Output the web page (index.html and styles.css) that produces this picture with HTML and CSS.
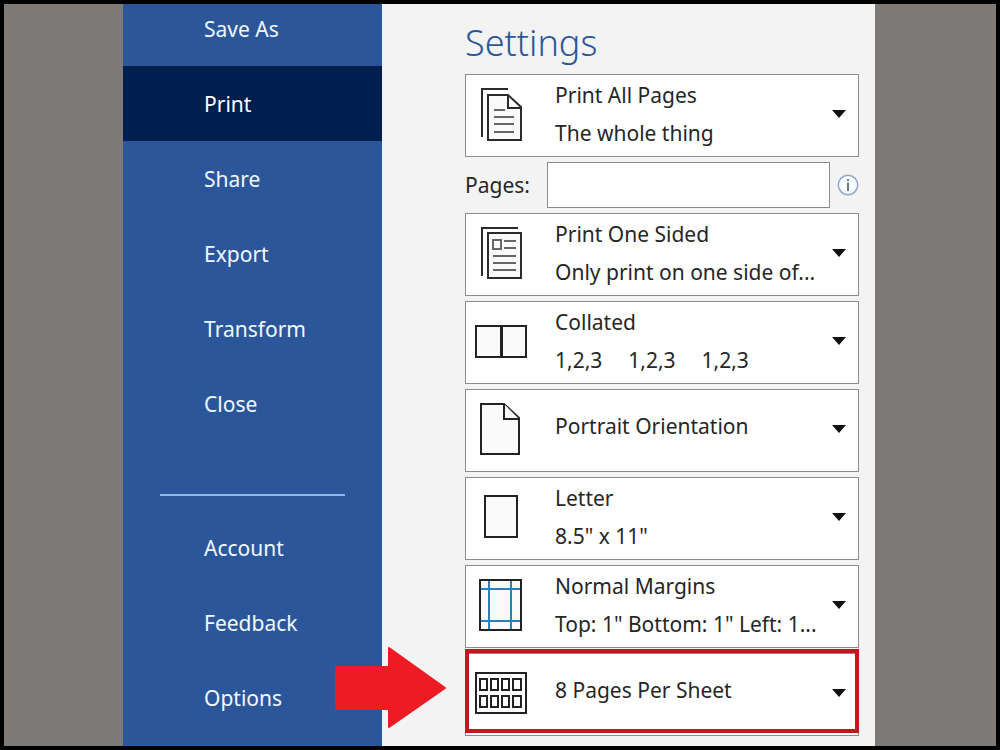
FILE: index.html
```html
<!DOCTYPE html>
<html lang="en">
<head>
<meta charset="utf-8">
<meta name="viewport" content="width=device-width, initial-scale=1">
<title>Print</title>
<link rel="stylesheet" href="styles.css">
</head>
<body>
<div class="stage">
  <nav class="sidebar" aria-label="File menu">
    <ul class="menu">
      <li><a class="menu-link" href="#save-as">Save As</a></li>
      <li><a class="menu-link active" href="#print" aria-current="page">Print</a></li>
      <li><a class="menu-link" href="#share">Share</a></li>
      <li><a class="menu-link" href="#export">Export</a></li>
      <li><a class="menu-link" href="#transform">Transform</a></li>
      <li><a class="menu-link" href="#close">Close</a></li>
    </ul>
    <hr class="divider">
    <ul class="menu">
      <li><a class="menu-link" href="#account">Account</a></li>
      <li><a class="menu-link" href="#feedback">Feedback</a></li>
      <li><a class="menu-link" href="#options">Options</a></li>
    </ul>
  </nav>
  <main class="panel">
    <h1 class="title">Settings</h1>

    <button class="option" type="button" aria-haspopup="listbox">
      <svg class="icon" width="60" height="60" viewBox="0 0 60 60" fill="none" stroke="#2b2b2b" stroke-width="2">
        <path d="M12 53V5H38"/>
        <path d="M18 11H38L51 23V56H18Z" fill="#fafafa"/>
        <path d="M38 11V24H51"/>
        <path d="M24 26H35M24 33H44M24 40H44M24 48H44" stroke="#666"/>
      </svg>
      <span class="text"><span class="line">Print All Pages</span><span class="line">The whole thing</span></span>
      <svg class="caret" width="14" height="8" viewBox="0 0 14 8"><path d="M0 0H14L7 8Z"/></svg>
    </button>

    <div class="pages">
      <label class="pages-label" for="pages">Pages:</label>
      <input class="pages-input" id="pages" type="text">
      <svg class="info" width="22" height="22" viewBox="0 0 22 22" role="img" aria-label="Information">
        <circle cx="11" cy="11" r="9.7" fill="#f8fbff" stroke="#8fa9d0" stroke-width="1.5"/>
        <path d="M11 8.5V17M11 5V7" stroke="#53647f" stroke-width="1.7"/>
      </svg>
    </div>

    <button class="option" type="button" aria-haspopup="listbox">
      <svg class="icon" width="60" height="60" viewBox="0 0 60 60" fill="none" stroke="#2b2b2b" stroke-width="2">
        <path d="M12 53V5H48"/>
        <path d="M18 10H51V55H18Z" fill="#fafafa"/>
        <path d="M23 17H31V26H23Z M34 18H46M34 25H46M23 33H46M23 40H46M23 47H46" stroke="#666"/>
      </svg>
      <span class="text"><span class="line">Print One Sided</span><span class="line">Only print on one side of...</span></span>
      <svg class="caret" width="14" height="8" viewBox="0 0 14 8"><path d="M0 0H14L7 8Z"/></svg>
    </button>

    <button class="option" type="button" aria-haspopup="listbox">
      <svg class="icon" width="60" height="60" viewBox="0 0 60 60" fill="#fafafa" stroke="#222" stroke-width="2">
        <path d="M6 15H31V46H6Z M32 15H56V46H32Z"/>
      </svg>
      <span class="text"><span class="line">Collated</span><span class="line sets"><span>1,2,3</span><span>1,2,3</span><span>1,2,3</span></span></span>
      <svg class="caret" width="14" height="8" viewBox="0 0 14 8"><path d="M0 0H14L7 8Z"/></svg>
    </button>

    <button class="option single" type="button" aria-haspopup="listbox">
      <svg class="icon" width="60" height="60" viewBox="0 0 60 60" fill="#fafafa" stroke="#222" stroke-width="2">
        <path d="M11 5H34L49 19V55H11Z"/>
        <path d="M34 5V20H49"/>
      </svg>
      <span class="text"><span class="line">Portrait Orientation</span></span>
      <svg class="caret" width="14" height="8" viewBox="0 0 14 8"><path d="M0 0H14L7 8Z"/></svg>
    </button>

    <button class="option" type="button" aria-haspopup="listbox">
      <svg class="icon" width="60" height="60" viewBox="0 0 60 60" fill="#fafafa" stroke="#222" stroke-width="2">
        <path d="M15 9H47V50H15Z"/>
      </svg>
      <span class="text"><span class="line">Letter</span><span class="line">8.5" x 11"</span></span>
      <svg class="caret" width="14" height="8" viewBox="0 0 14 8"><path d="M0 0H14L7 8Z"/></svg>
    </button>

    <button class="option" type="button" aria-haspopup="listbox">
      <svg class="icon" width="60" height="60" viewBox="0 0 60 60" fill="none" stroke-width="2">
        <path d="M10 5H51V55H10Z" fill="#fafafa" stroke="#222"/>
        <path d="M19 6V54M41 6V54M11 14H50M11 46H50" stroke="#2483bd"/>
      </svg>
      <span class="text"><span class="line">Normal Margins</span><span class="line">Top: 1" Bottom: 1" Left: 1...</span></span>
      <svg class="caret" width="14" height="8" viewBox="0 0 14 8"><path d="M0 0H14L7 8Z"/></svg>
    </button>

    <div class="callout">
      <button class="option single" type="button" aria-haspopup="listbox">
        <svg class="icon" width="60" height="60" viewBox="0 0 60 60" fill="none" stroke="#222" stroke-width="2">
          <path d="M6 10H56V50H6Z"/>
          <path d="M10 16H17V27H10Z M21 16H28V27H21Z M32 16H39V27H32Z M43 16H51V27H43Z M10 33H17V44H10Z M21 33H28V44H21Z M32 33H39V44H32Z M43 33H51V44H43Z"/>
        </svg>
        <span class="text"><span class="line">8 Pages Per Sheet</span></span>
        <svg class="caret" width="14" height="8" viewBox="0 0 14 8"><path d="M0 0H14L7 8Z"/></svg>
      </button>
      <svg class="pointer" width="112" height="84" viewBox="0 0 112 84" aria-hidden="true">
        <path d="M1 21H54V2L110 42L54 81V63H1Z" fill="#ed1c24" stroke="#ed1c24" stroke-width="2" stroke-linejoin="round"/>
      </svg>
    </div>
  </main>
</div>
</body>
</html>
```
FILE: styles.css
```css
* {
  box-sizing: border-box;
}

body {
  margin: 0;
  font-family: "Noto Sans", "Open Sans", sans-serif;
  font-size: 21px;
  color: #262626;
}

.stage {
  display: grid;
  grid-template-columns: minmax(0, 119fr) minmax(0, 259fr) minmax(0, 493fr) minmax(0, 121fr);
  min-height: 100vh;
  border: 4px solid #000;
  background: #7d7977;
}

.sidebar {
  grid-column: 2;
  overflow: hidden;
  background: #2b579a;
}

.menu {
  margin: 0;
  padding: 0;
  list-style: none;
}

.menu:first-child {
  margin-top: -13px;
}

.menu-link {
  display: flex;
  align-items: center;
  height: 75px;
  padding-left: 81px;
  color: #f2f7ff;
  text-decoration: none;
}

.menu-link.active {
  background: #001e4e;
  color: #fff;
}

.divider {
  height: 2px;
  margin: 53px 37px 14px;
  border: 0;
  background: #8fb8ea;
}

.panel {
  display: flex;
  flex-direction: column;
  gap: 5px;
  padding: 12px 16px 8px 83px;
  background: #f3f3f3;
}

.title {
  margin: 0;
  font-size: 36px;
  font-weight: 300;
  line-height: 53px;
  color: #2b579a;
}

.option {
  display: flex;
  align-items: center;
  width: 100%;
  min-height: 83px;
  padding: 0 12px 3px 4px;
  border: 1px solid #8c8c8c;
  background: #fff;
  font: inherit;
  color: inherit;
  text-align: left;
}

.icon {
  flex: none;
  margin-right: 25px;
}

.text {
  flex: 1;
  min-width: 0;
}

.single .text {
  padding-bottom: 6px;
}

.line {
  display: block;
  line-height: 38px;
  white-space: nowrap;
}

.sets {
  display: flex;
  gap: 26px;
}

.caret {
  flex: none;
  fill: #111;
}

.pages {
  display: flex;
  align-items: center;
  height: 46px;
}

.pages-label {
  width: 82px;
}

.pages-input {
  flex: 1;
  min-width: 0;
  height: 46px;
  margin-right: 7px;
  padding: 0 8px;
  border: 1px solid #8c8c8c;
  background: #fff;
  font: inherit;
}

.callout {
  position: relative;
}

.callout::after {
  content: "";
  position: absolute;
  inset: -4px 0 3px;
  border: 4px solid #c4161d;
  pointer-events: none;
}

.pointer {
  position: absolute;
  top: -7px;
  left: -130px;
}
```
